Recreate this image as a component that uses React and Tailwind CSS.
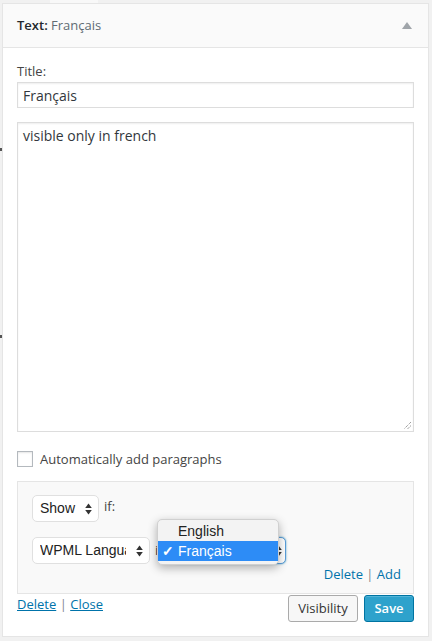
import React from "react";

const os = { fontFamily: '"Open Sans", "Noto Sans", sans-serif' };
const sys = { fontFamily: '"Liberation Sans", Arial, sans-serif' };

function Arrows({ className = "" }) {
  return (
    <svg width="7" height="12" viewBox="0 0 7 12" className={className}>
      <path d="M3.5 0.5 L6.8 5 L0.2 5 Z" fill="#333" />
      <path d="M3.5 11.5 L6.8 7 L0.2 7 Z" fill="#333" />
    </svg>
  );
}

export default function App() {
  return (
    <div className="w-[432px] h-[641px] bg-[#f1f1f1] overflow-hidden relative" style={os}>
      <div className="absolute left-[50px] top-0 w-[48px] h-[3px] bg-[#f8f8f8]" />
      <div className="absolute left-0 top-[148px] w-[2px] h-[3px] bg-[#555]" />
      <div className="absolute left-0 top-[335px] w-[2px] h-[3px] bg-[#555]" />
      <div className="ml-[2px] mt-[3px] w-[427px] h-[634px] bg-white border border-[#e5e5e5] flex flex-col">
        <div className="h-[44px] bg-[#fafafa] border-b border-[#e5e5e5] flex items-center justify-between pl-[14px] pr-[16px] shrink-0">
          <div className="text-[13px] font-semibold text-[#23282d] leading-none">
            Text: <span className="text-[#606a73] font-medium">Français</span>
          </div>
          <svg width="10" height="7" viewBox="0 0 10 7">
            <path d="M5 0 L10 7 L0 7 Z" fill="#a0a5aa" />
          </svg>
        </div>
        <div className="px-[14px] pt-[13px] flex flex-col">
          <div className="text-[13px] text-[#444] leading-[20px]">Title:</div>
          <div className="mt-[1px] h-[26px] border border-[#ddd] shadow-[inset_0_1px_2px_rgba(0,0,0,0.07)] flex items-center px-[5px] text-[14px] text-[#32373c]">
            Français
          </div>
          <div className="mt-[14px] h-[310px] border border-[#ddd] shadow-[inset_0_1px_2px_rgba(0,0,0,0.07)] relative px-[5px] pt-[3px] text-[14px] text-[#32373c] leading-[20px]">
            visible only in french
            <svg width="9" height="9" viewBox="0 0 9 9" className="absolute right-[1px] bottom-[1px]">
              <path d="M8 1 L1 8 M8 4.5 L4.5 8" stroke="#777" strokeWidth="1" strokeDasharray="1 1" />
            </svg>
          </div>
          <div className="mt-[19px] h-[16px] flex items-center gap-[7px]">
            <div className="w-[16px] h-[16px] border border-[#b4b9be] shadow-[inset_0_1px_2px_rgba(0,0,0,0.1)] bg-white" />
            <span className="text-[13px] text-[#444] leading-[16px]">Automatically add paragraphs</span>
          </div>
          <div className="mt-[14px] h-[113px] bg-[#f9f9f9] border border-[#e5e5e5] relative px-[14px] pt-[13px]" style={sys}>
            <div className="flex items-center gap-[5px]">
              <div className="w-[67px] h-[27px] bg-white border border-[#e0e0e0] rounded-[5px] flex items-center justify-between pl-[7px] pr-[6px] text-[14px] text-[#222]">
                Show <Arrows />
              </div>
              <span className="text-[13px] text-[#444] -mt-[3px]" style={os}>if:</span>
            </div>
            <div className="mt-[15px] flex items-center gap-[5px]">
              <div className="w-[118px] h-[27px] bg-white border border-[#e0e0e0] rounded-[5px] flex items-center justify-between pl-[7px] pr-[6px] text-[14px] text-[#222] overflow-hidden">
                <span className="whitespace-nowrap overflow-hidden w-[86px]">WPML Language</span> <Arrows />
              </div>
              <span className="text-[13px] text-[#444]" style={os}>is:</span>
              <div className="w-[113px] h-[27px] bg-white border border-[#5b9dd9] rounded-[5px] shadow-[0_0_2px_rgba(30,140,190,0.8)] flex items-center justify-end pr-[3px]">
                <Arrows />
              </div>
            </div>
            <div className="absolute right-[12px] top-[83px] text-[13px] text-[#0073aa]" style={os}>
              Delete <span className="text-[#82878c]">|</span> Add
            </div>
            <div className="absolute left-[139px] top-[37px] w-[122px] h-[46px] bg-[#f3f3f3] rounded-[5px] border border-[#d0d0d0] shadow-[0_3px_10px_rgba(0,0,0,0.3)] py-[1px] text-[14px]">
              <div className="h-[20px] flex items-center pl-[20px] text-[#222]">English</div>
              <div className="h-[20px] flex items-center bg-[#2d8cf6] text-white">
                <span className="w-[20px] text-center text-[14px] font-bold">✓</span>Français
              </div>
            </div>
          </div>
          <div className="flex justify-between items-start mt-[1px]">
            <div className="text-[13px] text-[#0073aa] mt-[0px]">
              <span className="underline">Delete</span> <span className="text-[#82878c]">|</span> <span className="underline">Close</span>
            </div>
            <div className="flex gap-[6px] mt-[0px]">
              <div className="w-[70px] h-[27px] bg-[#f7f7f7] border border-[#aaa] rounded-[3px] flex items-center justify-center text-[13px] text-[#333]">
                Visibility
              </div>
              <div className="w-[50px] h-[27px] bg-[#2ea2cc] border border-[#0074a2] rounded-[3px] flex items-center justify-center text-[13px] font-semibold text-white shadow-[inset_0_1px_0_rgba(120,200,230,0.5)]">
                Save
              </div>
            </div>
          </div>
        </div>
      </div>
    </div>
  );
}
